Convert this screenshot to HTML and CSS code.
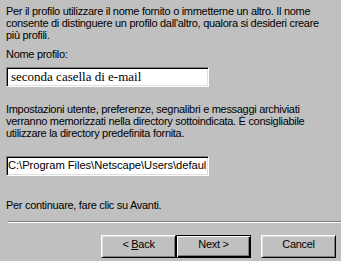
FILE: index.html
```html
<!DOCTYPE html>
<html>
<head>
<meta charset="utf-8">
<link rel="stylesheet" href="styles.css">
</head>
<body>
<div class="content">
  <p class="para first">Per il profilo utilizzare il nome fornito o immetterne un altro. Il nome consente di distinguere un profilo dall'altro, qualora si desideri creare più profili.</p>
  <div class="label">Nome profilo:</div>
  <div class="field field-name">seconda casella di e-mail</div>
  <p class="para second">Impostazioni utente, preferenze, segnalibri e messaggi archiviati verranno memorizzati nella directory sottoindicata. È consigliabile utilizzare la directory predefinita fornita.</p>
  <div class="field field-path">C:\Program Files\Netscape\Users\defaul</div>
  <p class="para hint">Per continuare, fare clic su Avanti.</p>
</div>
<div class="separator"></div>
<div class="buttons">
  <div class="btn">&lt; <u>B</u>ack</div>
  <div class="btn btn-default">Next &gt;</div>
  <div class="btn btn-cancel">Cancel</div>
</div>
</body>
</html>
```
FILE: styles.css
```css
html, body {
  margin: 0;
  padding: 0;
  background: #c0c0c0;
}
body {
  width: 341px;
  height: 261px;
  overflow: hidden;
  font-family: "Liberation Sans", Arial, sans-serif;
  font-size: 11px;
  letter-spacing: -0.3px;
  line-height: 12px;
  color: #000;
}
.content {
  width: 329px;
  padding: 5px 6px 0 6px;
}
.para {
  margin: 0;
}
.label {
  margin-top: 7px;
}
.field {
  box-sizing: border-box;
  width: 203px;
  height: 20px;
  background: #fff;
  border-style: solid;
  border-width: 1px;
  border-color: #808080 #fff #fff #808080;
  box-shadow: inset 1px 1px #000, inset -1px -1px #dfdfdf;
  white-space: nowrap;
  overflow: hidden;
}
.field-name {
  margin-top: 7px;
  padding: 1px 0 0 4px;
  font-family: "Liberation Serif", "Times New Roman", serif;
  font-size: 13px;
  letter-spacing: 0;
  line-height: 16px;
}
.field-path {
  margin-top: 17px;
  padding: 1px 0 0 1px;
  font-size: 11.2px;
  letter-spacing: -0.05px;
  line-height: 15px;
}
.second {
  margin-top: 16px;
}
.hint {
  margin-top: 23px;
}
.separator {
  margin: 10px 0 0 8px;
  height: 0;
  border-top: 1px solid #808080;
  border-bottom: 1px solid #fff;
}
.buttons {
  display: flex;
  justify-content: flex-end;
  margin-top: 12px;
  padding-right: 5px;
}
.btn {
  box-sizing: border-box;
  width: 75px;
  height: 23px;
  padding-bottom: 2px;
  text-align: center;
  line-height: 17px;
  border-style: solid;
  border-width: 1px;
  border-color: #fff #000 #000 #fff;
  box-shadow: inset 1px 1px #dfdfdf, inset -1px -1px #808080;
}
.btn u {
  text-decoration-thickness: 1px;
}
.btn-default {
  border-color: #000;
  box-shadow: inset 1px 1px #fff, inset -1px -1px #000, inset -2px -2px #808080;
}
.btn-cancel {
  margin-left: 10px;
}
```
